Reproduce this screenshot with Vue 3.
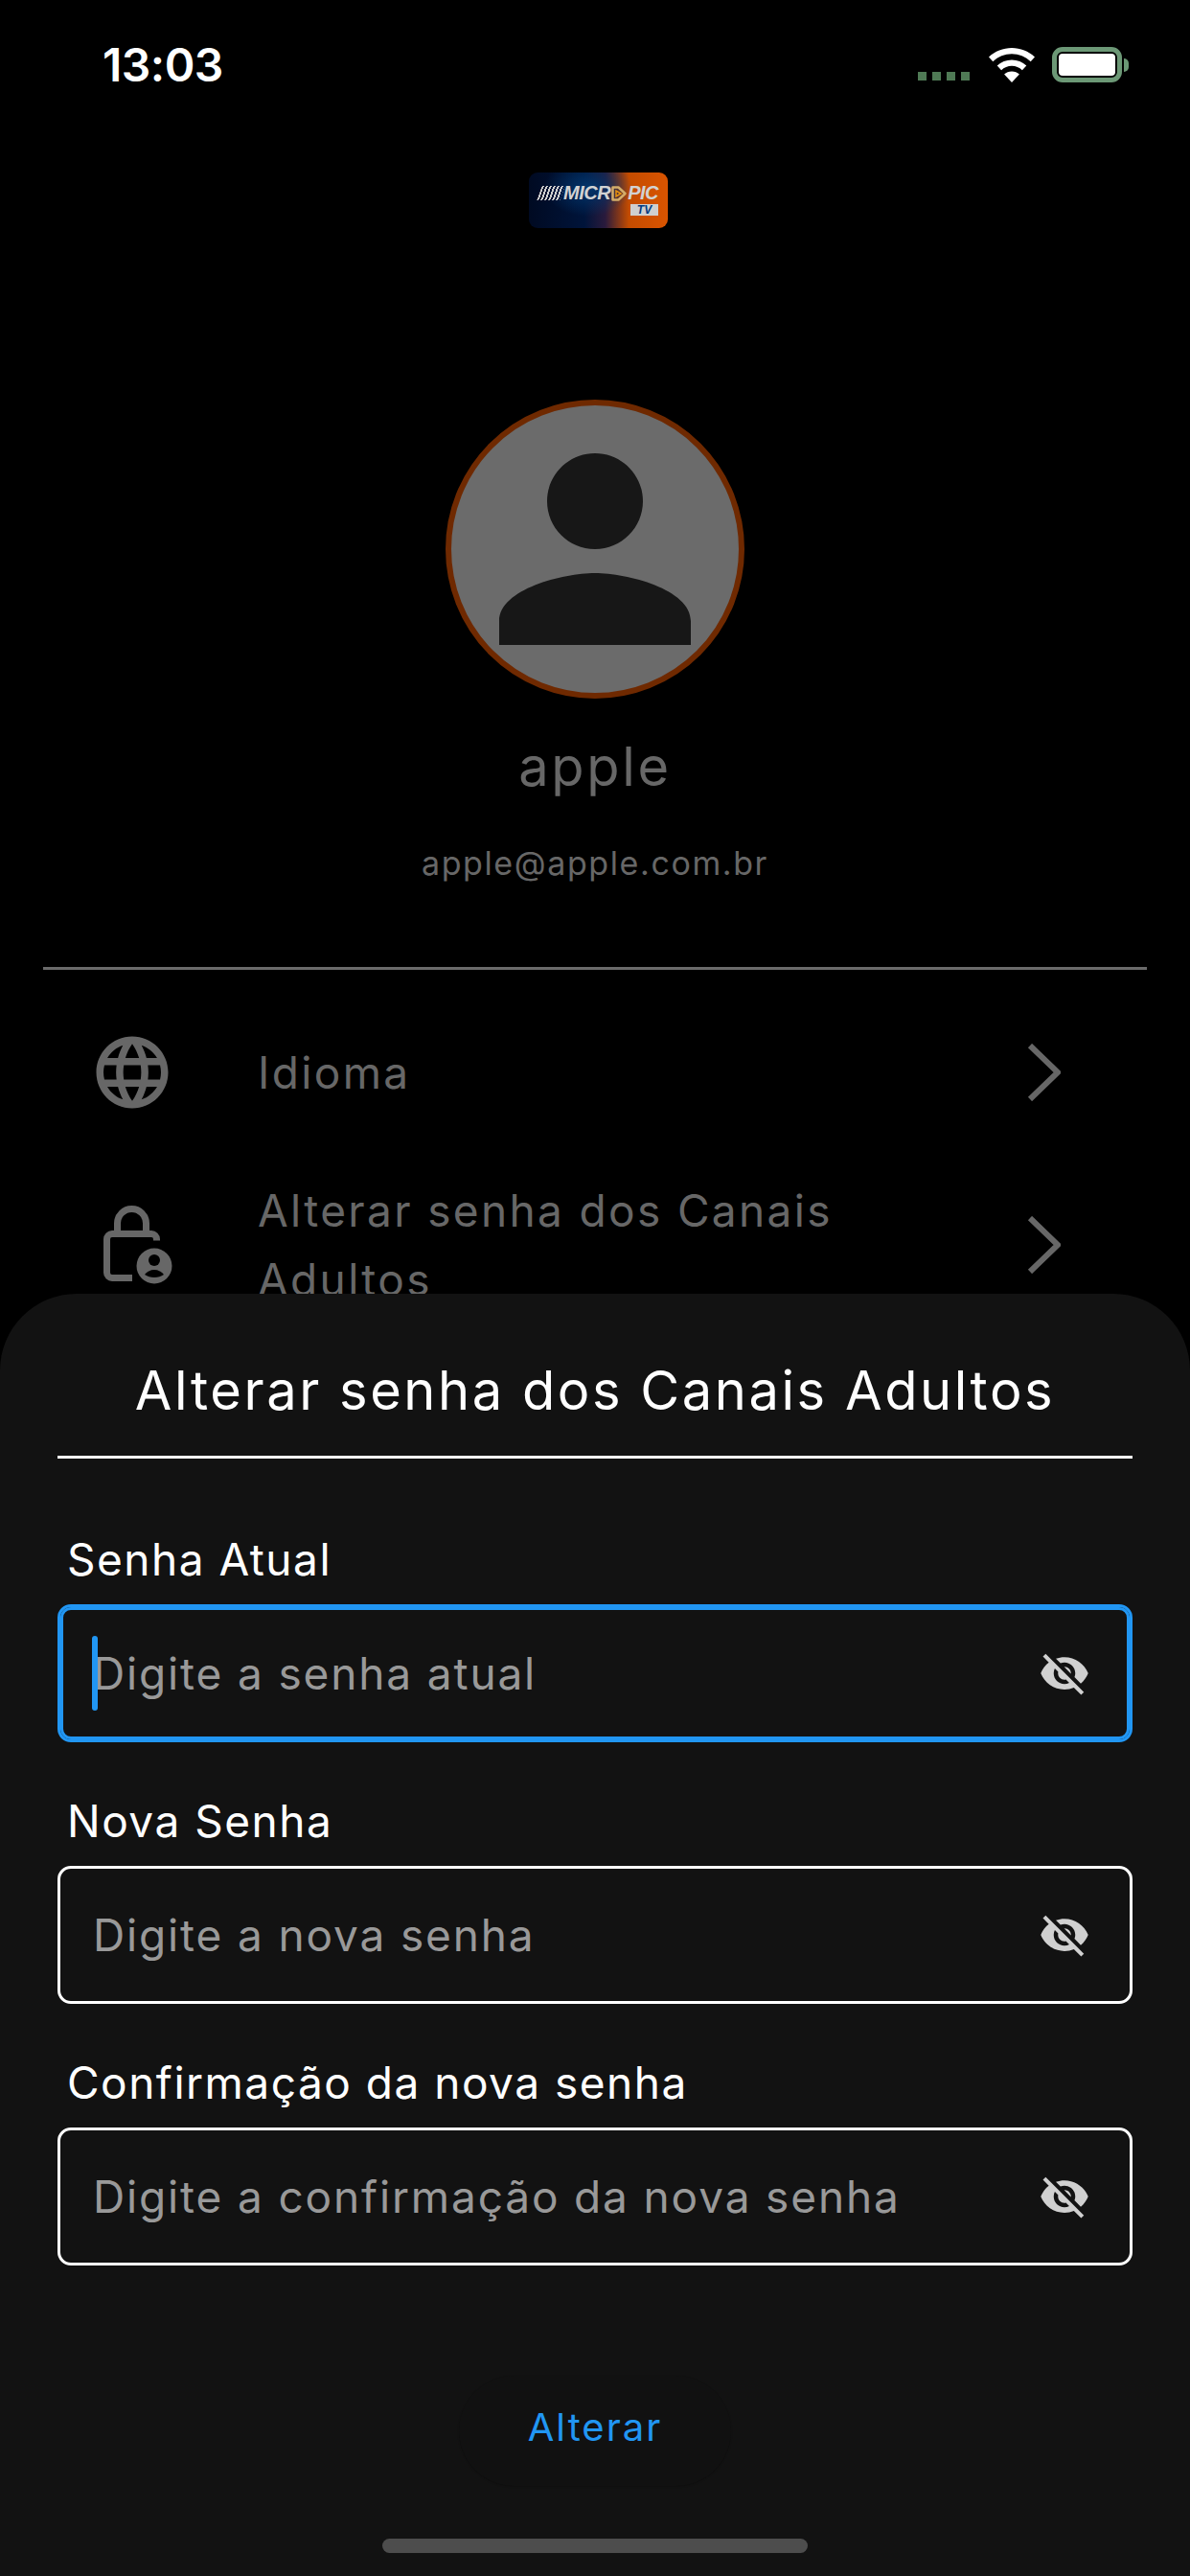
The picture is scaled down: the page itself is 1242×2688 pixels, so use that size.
<script setup>
const eyeOff = "M12 7c2.76 0 5 2.24 5 5 0 .65-.13 1.26-.36 1.83l2.92 2.92c1.51-1.26 2.7-2.89 3.43-4.75-1.73-4.39-6-7.5-11-7.5-1.4 0-2.74.25-3.98.7l2.16 2.16C10.74 7.13 11.35 7 12 7zM2 4.27l2.28 2.28.46.46C3.08 8.3 1.78 10.02 1 12c1.73 4.39 6 7.5 11 7.5 1.55 0 3.03-.3 4.38-.84l.42.42L19.73 22 21 20.73 3.27 3 2 4.27zM7.53 9.8l1.55 1.55c-.05.21-.08.43-.08.65 0 1.66 1.34 3 3 3 .22 0 .44-.03.65-.08l1.55 1.55c-.67.33-1.41.53-2.2.53-2.76 0-5-2.24-5-5 0-.79.2-1.53.53-2.2zm4.31-.78l3.15 3.15.02-.16c0-1.66-1.34-3-3-3l-.17.01z";
const fields = [
  { label: "Senha Atual", placeholder: "Digite a senha atual", focused: true },
  { label: "Nova Senha", placeholder: "Digite a nova senha", focused: false },
  { label: "Confirmação da nova senha", placeholder: "Digite a confirmação da nova senha", focused: false },
];
</script>

<template>
  <div class="page">
    <div class="status">
      <span class="time">13:03</span>
      <div class="status-icons">
        <div class="signal"><i></i><i></i><i></i><i></i></div>
        <svg class="wifi" width="48" height="36" viewBox="0 0 48 36">
          <path fill="#fff" d="M24 0C15 0 6.500 3.500 0 9.500l4.300 4.700C9.700 9.300 16.600 6.300 24 6.300s14.300 3 19.700 7.900L48 9.500C41.500 3.500 33 0 24 0z" />
          <path fill="#fff" d="M24 12.500c-5.800 0-11.200 2.200-15.300 6l4.400 4.700c2.900-2.700 6.800-4.400 10.900-4.400s8 1.700 10.900 4.400l4.400-4.700c-4.100-3.800-9.500-6-15.300-6z" />
          <path fill="#fff" d="M24 24.500c-3 0-5.800 1.100-7.900 3L24 36l7.900-8.500c-2.100-1.900-4.900-3-7.900-3z" />
        </svg>
        <div class="battery">
          <div class="battery-body"><div class="battery-fill"></div></div>
          <div class="battery-cap"></div>
        </div>
      </div>
    </div>

    <div class="logo">
      <div class="logo-line">
        <span class="logo-stripes"></span>
        <span class="logo-word">MICR</span>
        <svg class="logo-play" width="18" height="16" viewBox="0 0 18 16">
          <path d="M2.500 1.500h6l7 6.500-7 6.500h-6z" fill="none" stroke="#d4ad6a" stroke-width="2.500" stroke-linejoin="round" />
          <path d="M6 5v6l5-3z" fill="none" stroke="#e8930f" stroke-width="1.500" />
        </svg>
        <span class="logo-word">PIC</span>
      </div>
      <span class="logo-tv">TV</span>
    </div>

    <div class="avatar">
      <svg width="300" height="300" viewBox="0 0 24 24">
        <path fill="#171717" d="M12 12c2.210 0 4-1.790 4-4s-1.790-4-4-4-4 1.790-4 4 1.790 4 4 4zm0 2c-2.670 0-8 1.340-8 4v2h16v-2c0-2.660-5.330-4-8-4z" />
      </svg>
    </div>

    <div class="name">apple</div>
    <div class="email">apple@apple.com.br</div>
    <div class="rule"></div>

    <div class="row">
      <svg class="row-icon" width="90" height="90" viewBox="0 0 24 24">
        <path fill="#676767" d="M11.990 2C6.470 2 2 6.480 2 12s4.470 10 9.990 10C17.520 22 22 17.520 22 12S17.520 2 11.990 2zm6.930 6h-2.950c-.32-1.250-.78-2.450-1.380-3.560 1.840.63 3.370 1.910 4.330 3.560zM12 4.040c.83 1.200 1.480 2.530 1.910 3.960h-3.820c.43-1.430 1.080-2.760 1.910-3.960zM4.260 14C4.100 13.360 4 12.690 4 12s.1-1.360.26-2h3.380c-.08.66-.14 1.320-.14 2 0 .68.06 1.340.14 2H4.260zm.82 2h2.950c.32 1.250.78 2.450 1.380 3.560-1.840-.63-3.370-1.900-4.330-3.560zm2.950-8H5.080c.96-1.660 2.490-2.930 4.330-3.560C8.810 5.550 8.350 6.750 8.030 8zM12 19.960c-.83-1.200-1.480-2.530-1.910-3.960h3.820c-.43 1.430-1.080 2.760-1.910 3.960zM14.340 14H9.660c-.09-.66-.16-1.320-.16-2 0-.68.07-1.350.16-2h4.680c.09.65.16 1.320.16 2 0 .68-.07 1.340-.16 2zm.25 5.560c.6-1.110 1.060-2.310 1.380-3.560h2.950c-.96 1.650-2.490 2.930-4.330 3.560zM16.360 14c.08-.66.14-1.320.14-2 0-.68-.06-1.340-.14-2h3.380c.16.640.26 1.310.26 2s-.1 1.360-.26 2h-3.380z" />
      </svg>
      <div class="row-text">Idioma</div>
      <svg class="chevron" width="35" height="60" viewBox="0 0 35 60">
        <path d="M3 2l29 28L3 58" fill="none" stroke="#676767" stroke-width="6" />
      </svg>
    </div>
    <div class="row">
      <svg class="row-icon" width="90" height="90" viewBox="0 0 90 90">
        <path d="M29.500 33V22.500a15 15 0 0 1 30 0V33" fill="none" stroke="#676767" stroke-width="7" />
        <path d="M45 79.500H24a5.500 5.500 0 0 1-5.500-5.500V39a5.500 5.500 0 0 1 5.500-5.500h41a5.500 5.500 0 0 1 5.500 5.500v1.500" fill="none" stroke="#676767" stroke-width="7" />
        <circle cx="68" cy="67" r="18.500" fill="#676767" />
        <circle cx="68" cy="61" r="6" fill="#000" />
        <path d="M58 76c2-3 6-5 10-5s8 2 10 5c-3 2-6 3-10 3s-7-1-10-3z" fill="#000" />
      </svg>
      <div class="row-text">Alterar senha dos Canais Adultos</div>
      <svg class="chevron" width="35" height="60" viewBox="0 0 35 60">
        <path d="M3 2l29 28L3 58" fill="none" stroke="#676767" stroke-width="6" />
      </svg>
    </div>

    <div class="sheet">
      <div class="sheet-title">Alterar senha dos Canais Adultos</div>
      <div class="sheet-rule"></div>
      <div class="form">
        <div v-for="f in fields" :key="f.label" class="field">
          <div class="label">{{ f.label }}</div>
          <div class="input" :class="{ focused: f.focused }">
            <span v-if="f.focused" class="caret"></span>
            <span class="placeholder">{{ f.placeholder }}</span>
            <svg width="54" height="54" viewBox="0 0 24 24"><path fill="#d0d0d0" :d="eyeOff" /></svg>
          </div>
        </div>
      </div>
      <div class="button">Alterar</div>
      <div class="home-bar"></div>
    </div>
  </div>
</template>

<style scoped>
.page {
  position: relative;
  width: 1242px;
  height: 2688px;
  overflow: hidden;
  background: #000;
  font-family: Inter, "Noto Sans", sans-serif;
}
.status {
  box-sizing: border-box;
  height: 136px;
  display: flex;
  justify-content: space-between;
  align-items: flex-start;
  padding: 49px 64px 0 107px;
}
.time {
  color: #fff;
  font-size: 48px;
  font-weight: 600;
  line-height: 38px;
  letter-spacing: -0.5px;
}
.status-icons {
  display: flex;
  align-items: flex-start;
  gap: 18px;
}
.signal {
  display: flex;
  gap: 6px;
  margin-top: 26px;
  margin-right: 2px;
}
.signal i {
  width: 9px;
  height: 9px;
  background: #4f7a55;
}
.wifi {
  margin-top: 1px;
}
.battery {
  display: flex;
  align-items: center;
}
.battery-body {
  box-sizing: border-box;
  width: 73px;
  height: 37px;
  border: 5px solid #6c9876;
  border-radius: 11px;
  padding: 0 2px;
  display: flex;
  align-items: center;
}
.battery-fill {
  flex: 1;
  height: 23px;
  background: #fff;
  border-radius: 4px;
}
.battery-cap {
  width: 5px;
  height: 14px;
  margin-left: 2px;
  background: #6c9876;
  border-radius: 0 6px 6px 0;
}
.logo {
  box-sizing: border-box;
  width: 145px;
  height: 58px;
  margin: 44px 0 0 552px;
  padding: 13px 10px 0;
  border-radius: 9px;
  background:
    radial-gradient(ellipse 46px 30px at 62px 16px, #01356b 0%, rgba(1, 53, 107, 0) 100%),
    linear-gradient(90deg, #000a22 0%, #00143a 40%, #2a1a3c 55%, #c44c00 72%, #d95400 100%);
  display: flex;
  flex-direction: column;
  align-items: flex-end;
  overflow: hidden;
}
.logo-line {
  display: flex;
  align-items: center;
  height: 17px;
}
.logo-stripes {
  width: 24px;
  height: 15px;
  margin-right: 1px;
  transform: skewX(-20deg);
  background: repeating-linear-gradient(90deg, #cfcfcf 0 2px, transparent 2px 4px);
}
.logo-word {
  color: #d2d2d2;
  font-family: "Liberation Sans", sans-serif;
  font-size: 20px;
  font-weight: 700;
  font-style: italic;
  line-height: 17px;
  letter-spacing: -0.5px;
}
.logo-tv {
  box-sizing: border-box;
  width: 29px;
  height: 12px;
  margin-top: 3px;
  background: #cfcfcf;
  color: #013a80;
  font-family: "Liberation Sans", sans-serif;
  font-size: 12px;
  font-weight: 700;
  font-style: italic;
  line-height: 12px;
  text-align: center;
}
.avatar {
  box-sizing: border-box;
  width: 312px;
  height: 312px;
  margin: 179px 0 0 465px;
  border: 6px solid #6f2900;
  border-radius: 50%;
  background: #6b6b6b;
  display: flex;
  align-items: center;
  justify-content: center;
}
.name {
  margin-top: 31px;
  text-align: center;
  color: #676767;
  font-size: 56px;
  line-height: 80px;
  letter-spacing: 2.7px;
}
.email {
  margin-top: 31px;
  text-align: center;
  color: #676767;
  font-size: 34px;
  line-height: 60px;
  letter-spacing: 1.6px;
}
.rule {
  height: 3px;
  margin: 78px 45px 17px;
  background: #6b6b6b;
}
.row {
  box-sizing: border-box;
  height: 180px;
  display: flex;
  align-items: center;
  padding: 0 135px 0 93px;
}
.row-text {
  flex: 1;
  max-width: 640px;
  margin-left: 86px;
  margin-right: auto;
  color: #676767;
  font-size: 46px;
  line-height: 72px;
  letter-spacing: 2.35px;
}
.chevron {
  flex: none;
}
.sheet {
  position: absolute;
  left: 0;
  right: 0;
  top: 1350px;
  bottom: 0;
  background: #121212;
  border-radius: 80px 80px 0 0;
  padding-top: 61px;
  box-sizing: border-box;
}
.sheet-title {
  text-align: center;
  color: #fff;
  font-size: 56px;
  line-height: 80px;
  letter-spacing: 2.55px;
}
.sheet-rule {
  height: 3px;
  margin: 28px 60px 0;
  background: #fff;
}
.form {
  margin: 75px 60px 0;
  display: flex;
  flex-direction: column;
  gap: 52px;
}
.label {
  padding-left: 10px;
  color: #fff;
  font-size: 46px;
  line-height: 60px;
  letter-spacing: 1.5px;
  margin-bottom: 17px;
}
.input {
  position: relative;
  box-sizing: border-box;
  height: 144px;
  display: flex;
  align-items: center;
  justify-content: space-between;
  padding: 0 41px 0 34px;
  border: 3px solid #fff;
  border-radius: 14px;
}
.input.focused {
  border-color: #2196f3;
  box-shadow: inset 0 0 0 3px #2196f3;
}
.caret {
  position: absolute;
  left: 33px;
  top: 30px;
  width: 6px;
  height: 78px;
  border-radius: 3px;
  background: #2196f3;
}
.placeholder {
  color: #999;
  font-size: 46px;
  letter-spacing: 1.85px;
}
.button {
  width: 284px;
  height: 115px;
  margin: 115px auto 0;
  border-radius: 58px;
  background: #111;
  box-shadow: 0 1px 2px rgba(0, 0, 0, 0.2);
  color: #2196f3;
  font-size: 40px;
  line-height: 108px;
  letter-spacing: 2px;
  text-align: center;
}
.home-bar {
  position: absolute;
  left: 399px;
  top: 1299px;
  width: 444px;
  height: 15px;
  border-radius: 8px;
  background: #4d4d4d;
}
</style>
